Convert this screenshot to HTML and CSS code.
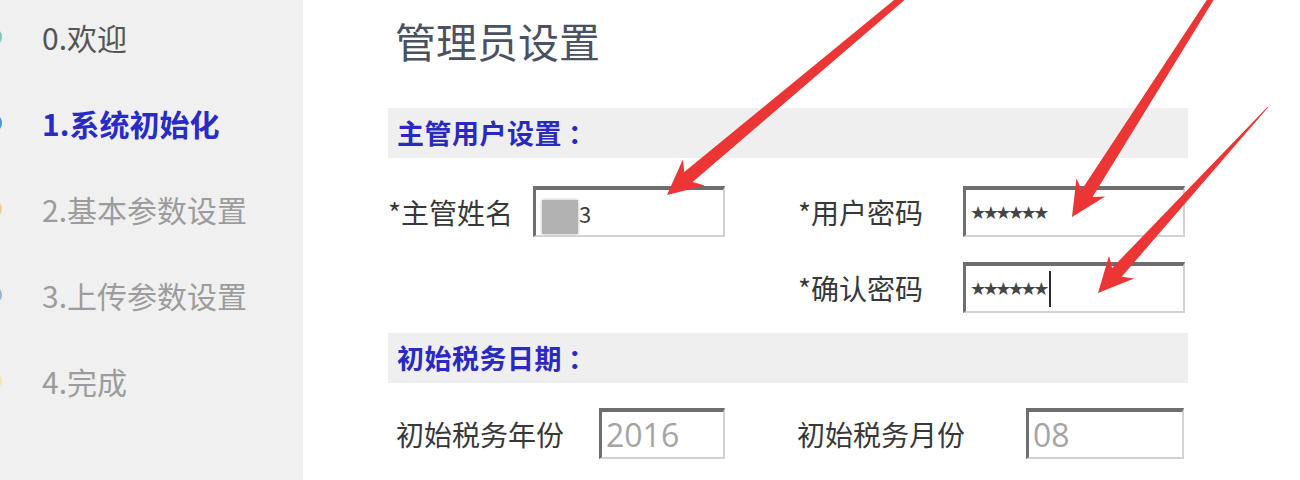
FILE: index.html
```html
<!DOCTYPE html>
<html lang="zh-CN">
<head>
<meta charset="utf-8">
<title>管理员设置</title>
<link rel="stylesheet" href="styles.css">
</head>
<body>
<div class="app">
  <aside class="sidebar">
    <ul class="steps">
      <li class="step done"><span class="dot dot-teal"></span><span class="step-text">0.欢迎</span></li>
      <li class="step active"><span class="dot dot-blue"></span><span class="step-text">1.系统初始化</span></li>
      <li class="step"><span class="dot dot-orange"></span><span class="step-text">2.基本参数设置</span></li>
      <li class="step"><span class="dot dot-slate"></span><span class="step-text">3.上传参数设置</span></li>
      <li class="step"><span class="dot dot-yellow"></span><span class="step-text">4.完成</span></li>
    </ul>
  </aside>
  <main class="main">
    <h1 class="title">管理员设置</h1>

    <div class="section-bar bar-first">主管用户设置<span class="colon">：</span></div>

    <div class="form-row row-1">
      <div class="field field-left">
        <span class="label">*主管姓名</span>
        <span class="tb tb-name"><span class="redact"></span><span class="name-tail">3</span></span>
      </div>
      <div class="field field-right">
        <span class="label">*用户密码</span>
        <span class="tb tb-pass"><span class="stars">★★★★★★</span></span>
      </div>
    </div>

    <div class="form-row row-2">
      <div class="field field-left"></div>
      <div class="field field-right">
        <span class="label">*确认密码</span>
        <span class="tb tb-pass"><span class="stars">★★★★★★</span><span class="caret"></span></span>
      </div>
    </div>

    <div class="section-bar bar-second">初始税务日期<span class="colon">：</span></div>

    <div class="form-row row-3">
      <div class="field field-left">
        <span class="label label-plain">初始税务年份</span>
        <span class="tb tb-year"><span class="val">2016</span></span>
      </div>
      <div class="field field-right">
        <span class="label label-month">初始税务月份</span>
        <span class="tb tb-month"><span class="val">08</span></span>
      </div>
    </div>
  </main>
</div>

<svg class="arrows" width="1300" height="480" viewBox="0 0 1300 480" aria-hidden="true">
  <defs>
    <filter id="soft" x="-5%" y="-5%" width="110%" height="110%">
      <feGaussianBlur stdDeviation="0.7"/>
    </filter>
  </defs>
  <g fill="#ec3434" filter="url(#soft)">
    <polygon transform="translate(667,195) rotate(-40)" points="0,0 35,-17 28,-6.5 345,-2.8 345,2.8 28,6.5 35,17"/>
    <polygon transform="translate(1072,217) rotate(-57.5)" points="0,0 35,-17 28,-6.5 285,-2.4 285,2.4 28,6.5 35,17"/>
    <polygon transform="translate(1098,293) rotate(-47.6)" points="0,0 35,-17 28,-6.5 252,-0.4 252,0.4 28,6.5 35,17"/>
  </g>
</svg>
</body>
</html>
```
FILE: styles.css
```css
html, body {
  margin: 0;
  padding: 0;
}

body {
  width: 1300px;
  height: 480px;
  overflow: hidden;
  position: relative;
  background: #ffffff;
  font-family: "Noto Sans CJK SC", "Noto Sans", sans-serif;
}

.app {
  display: flex;
  height: 480px;
}

/* ---------- sidebar ---------- */
.sidebar {
  width: 303px;
  flex: 0 0 303px;
  background: #f0f0f0;
  overflow: hidden;
}

.steps {
  list-style: none;
  margin: -6px 0 0 0;
  padding: 0;
}

.step {
  display: flex;
  align-items: center;
  height: 86px;
  font-size: 30px;
  color: #9c9c9c;
}

.step.done { color: #555555; }

.step.active {
  color: #2a2ac4;
  font-weight: 700;
}

.dot {
  width: 20px;
  height: 20px;
  border-radius: 50%;
  margin-left: -18px;
  margin-right: 40px;
  flex: 0 0 20px;
}

.dot-teal { background: #7cc8c0; }
.dot-blue { background: #4a94d8; }
.dot-orange { background: #f3cc9a; }
.dot-slate { background: #9ab6cc; }
.dot-yellow { background: #f0e6b4; }

.step-text { white-space: nowrap; }

/* ---------- main ---------- */
.main {
  flex: 1;
  display: flex;
  flex-direction: column;
  padding: 16px 0 0 85px;
}

.title {
  margin: 0;
  height: 48px;
  line-height: 48px;
  font-size: 41px;
  font-weight: 400;
  color: #4a5162;
  padding-left: 7px;
}

.section-bar {
  width: 800px;
  height: 50px;
  box-sizing: border-box;
  background: #efefef;
  padding-left: 9px;
  line-height: 50px;
  font-size: 27px;
  font-weight: 700;
  color: #2a2ac0;
  letter-spacing: 0.5px;
}

.colon { margin-left: 6px; }

.bar-first { margin-top: 44px; }
.bar-second { margin-top: 20px; }

.form-row {
  display: grid;
  grid-template-columns: 410px 390px;
  width: 800px;
  height: 51px;
}

.row-1 { margin-top: 28px; }
.row-2 { margin-top: 25px; }
.row-3 { margin-top: 25px; }

.field {
  display: flex;
  align-items: center;
  height: 51px;
}

.label {
  font-size: 28px;
  color: #383838;
  white-space: nowrap;
}

.field-left .label { width: 145px; flex: 0 0 145px; }
.field-right .label { width: 165px; flex: 0 0 165px; }

.field-left .label-plain {
  width: 211px;
  flex: 0 0 211px;
  box-sizing: border-box;
  padding-left: 8px;
}

.field-right .label-month {
  width: 229px;
  flex: 0 0 229px;
  box-sizing: border-box;
  padding-left: 0;
  margin-left: -1px;
}

/* classic inset text box */
.tb {
  display: flex;
  align-items: center;
  box-sizing: border-box;
  height: 51px;
  background: #ffffff;
  border-top: 4px solid #6e6e6e;
  border-left: 3px solid #6e6e6e;
  border-right: 2px solid #d2d2d2;
  border-bottom: 2px solid #d2d2d2;
  padding-left: 6px;
  overflow: hidden;
}

.tb-name { width: 192px; }
.tb-pass { width: 222px; padding-left: 4px; }
.tb-year { width: 126px; padding-left: 4px; }
.tb-month { width: 158px; padding-left: 4px; }

.redact {
  width: 36px;
  height: 34px;
  margin-top: 8px;
  background: #b2b2b2;
  box-shadow: 0 0 3px #b2b2b2;
}

.name-tail {
  font-size: 22px;
  color: #3c3c3c;
  margin-left: 1px;
}

.stars {
  font-family: "DejaVu Sans", sans-serif;
  font-size: 18px;
  letter-spacing: -3.5px;
  color: #454545;
  white-space: nowrap;
}

.caret {
  width: 2px;
  height: 36px;
  background: #2a2a2a;
  margin-left: 3px;
}

.val {
  font-family: "Open Sans", "Noto Sans", sans-serif;
  font-size: 32px;
  color: #a4a4a4;
}

/* ---------- annotation arrows overlay ---------- */
.arrows {
  position: absolute;
  top: 0;
  left: 0;
  pointer-events: none;
}
```
